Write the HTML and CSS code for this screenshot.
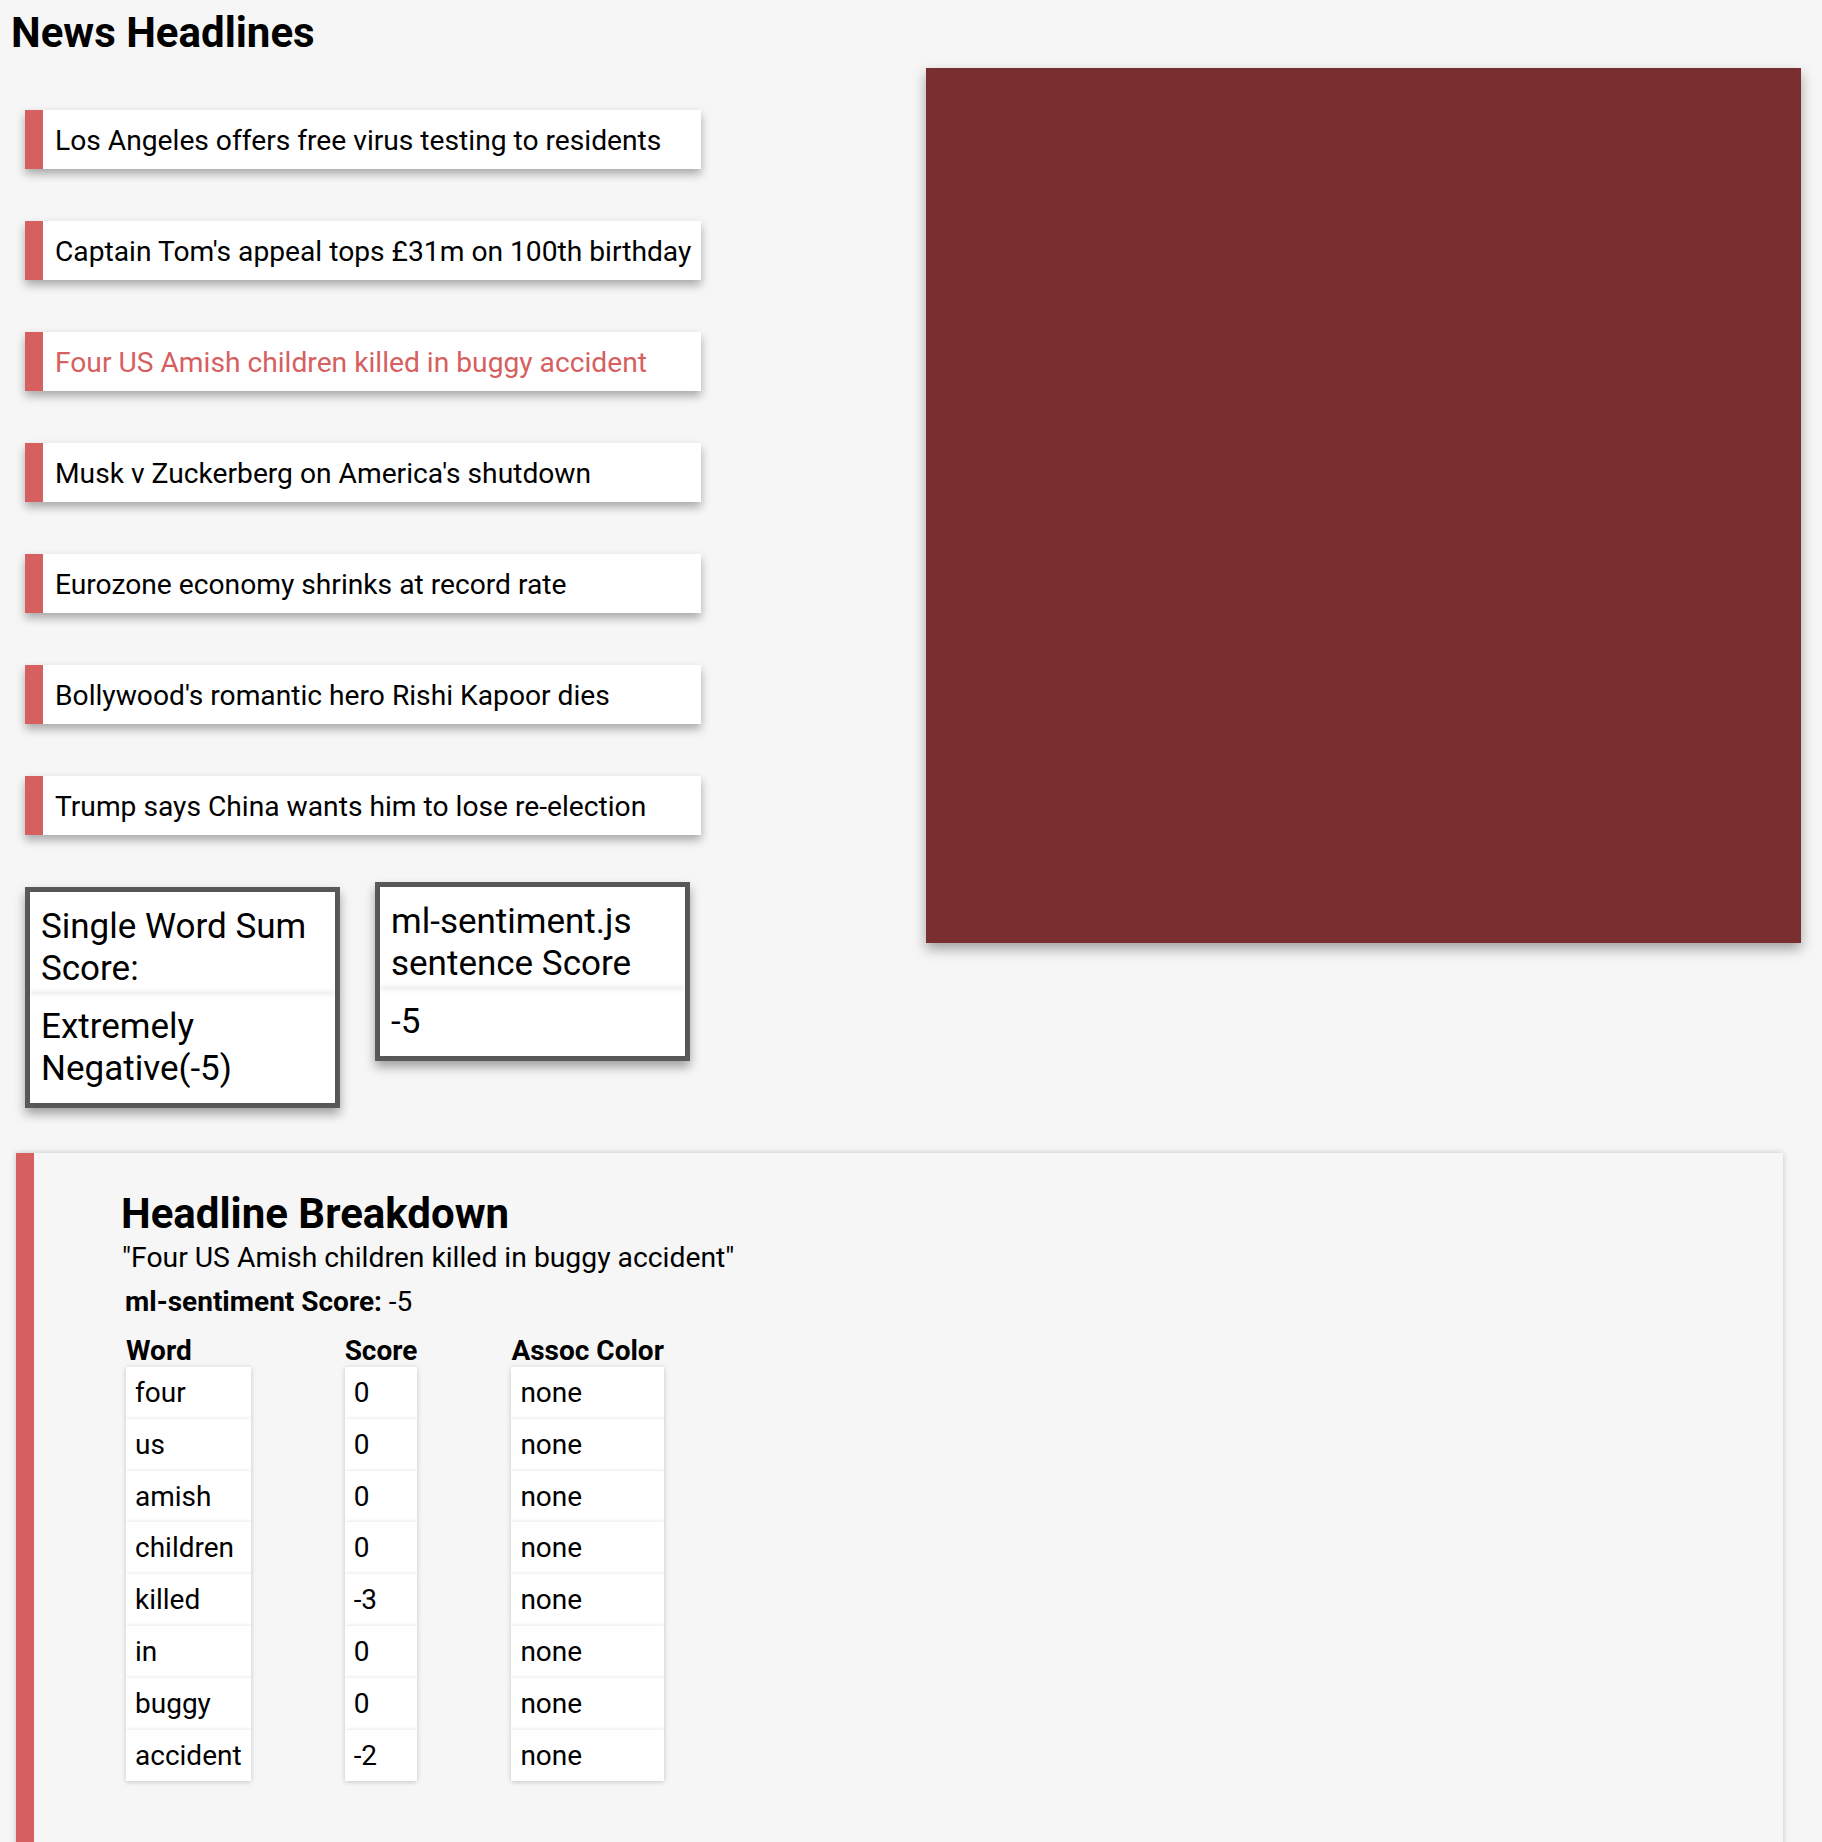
FILE: index.html
```html
<!DOCTYPE html>
<html lang="en">
<head>
  <meta charset="UTF-8">
  <title>News Headlines</title>
  <meta name="viewport" content="width=device-width, initial-scale=1.0"/>
  <link rel="stylesheet" href="styles.css">
</head>
<body>
  <h1 class="page-title">News Headlines</h1>

  <div class="top">
    <div class="left-col">
      <!-- Headline list -->
      <ul class="headline-list">
        <li class="headline">Los Angeles offers free virus testing to residents</li>
        <li class="headline">Captain Tom's appeal tops £31m on 100th birthday</li>
        <li class="headline is-active">Four US Amish children killed in buggy accident</li>
        <li class="headline">Musk v Zuckerberg on America's shutdown</li>
        <li class="headline">Eurozone economy shrinks at record rate</li>
        <li class="headline">Bollywood's romantic hero Rishi Kapoor dies</li>
        <li class="headline">Trump says China wants him to lose re-election</li>
      </ul>

      <!-- Scores -->
      <div class="score-row">
        <div class="score-box score-sum">
          <div class="score-head">Single Word Sum Score:</div>
          <div class="score-value">Extremely Negative(-5)</div>
        </div>
        <div class="score-box score-ml">
          <div class="score-head">ml-sentiment.js sentence Score</div>
          <div class="score-value">-5</div>
        </div>
      </div>
    </div>

    <div class="color-swatch"></div>
  </div>

  <!-- Breakdown -->
  <section class="breakdown">
    <h2>Headline Breakdown</h2>
    <p class="quote">"Four US Amish children killed in buggy accident"</p>
    <p class="ml-score"><b>ml-sentiment Score:</b> -5</p>

    <div class="word-grid">
      <div class="wg-head">Word</div>
      <div class="wg-head">Score</div>
      <div class="wg-head">Assoc Color</div>

      <div class="wg-cell">four</div><div class="wg-cell">0</div><div class="wg-cell">none</div>
      <div class="wg-cell">us</div><div class="wg-cell">0</div><div class="wg-cell">none</div>
      <div class="wg-cell">amish</div><div class="wg-cell">0</div><div class="wg-cell">none</div>
      <div class="wg-cell">children</div><div class="wg-cell">0</div><div class="wg-cell">none</div>
      <div class="wg-cell">killed</div><div class="wg-cell">-3</div><div class="wg-cell">none</div>
      <div class="wg-cell">in</div><div class="wg-cell">0</div><div class="wg-cell">none</div>
      <div class="wg-cell">buggy</div><div class="wg-cell">0</div><div class="wg-cell">none</div>
      <div class="wg-cell">accident</div><div class="wg-cell">-2</div><div class="wg-cell">none</div>
    </div>
  </section>
</body>
</html>
```

FILE: styles.css
```css
body {
  font-family: Roboto, "Liberation Sans", Arial, sans-serif;
  font-size: 28px;
  color: #000;
  margin: 0;
  background: #f6f6f6;
}

.page-title {
  margin: 0;
  padding: 8px 0 0 11px;
  font-size: 42px;
  line-height: 49px;
  font-weight: bold;
}

.top {
  display: flex;
  justify-content: space-between;
  align-items: flex-start;
  padding: 0 21px 0 25px;
}

.left-col {
  width: 676px;
}

.headline-list {
  list-style: none;
  margin: 53px 0 0;
  padding: 0;
}

.headline {
  display: flex;
  align-items: center;
  height: 59px;
  box-sizing: border-box;
  margin-bottom: 52px;
  padding: 2px 0 0 12px;
  font-size: 28.2px;
  background: #fff;
  border-left: 18px solid #d65f5f;
  box-shadow: 0 5px 9px rgba(0, 0, 0, 0.32);
}

.headline.is-active {
  color: #d65f5f;
}

.score-row {
  display: flex;
  align-items: flex-start;
  gap: 35px;
}

.score-box {
  width: 315px;
  box-sizing: border-box;
  border: 5px solid #5a5a5a;
  background: #fff;
  font-size: 35px;
  line-height: 42px;
  box-shadow: 0 6px 10px rgba(0, 0, 0, 0.35);
}

.score-ml {
  margin-top: -5px;
}

.score-head {
  padding: 14px 11px 3px;
  box-shadow: 0 0 6px rgba(0, 0, 0, 0.12);
}

.score-value {
  padding: 13px 11px 13px;
  box-shadow: 0 0 6px rgba(0, 0, 0, 0.12);
}

.color-swatch {
  width: 875px;
  height: 875px;
  margin-top: 11px;
  background: #792e30;
  box-shadow: 0 6px 12px rgba(0, 0, 0, 0.35);
}

/* Breakdown panel */
.breakdown {
  width: 1767px;
  box-sizing: border-box;
  margin: 45px 0 0 16px;
  padding: 36px 0 120px 87px;
  border-left: 18px solid #d65f5f;
  background: #f6f6f6;
  box-shadow: 0 0 6px rgba(0, 0, 0, 0.2);
}

.breakdown h2 {
  margin: 0;
  font-size: 42px;
  line-height: 49px;
}

.quote {
  margin: 3px 0 0 1px;
  font-size: 28.3px;
  line-height: 33px;
}

.ml-score {
  margin: 11px 0 0 4px;
  line-height: 33px;
}

.word-grid {
  display: grid;
  grid-template-columns: repeat(3, max-content);
  column-gap: 94px;
  margin: 16px 0 0 5px;
}

.wg-head {
  font-weight: bold;
  line-height: 33px;
}

.wg-cell {
  padding: 9px;
  line-height: 33.8px;
  background: #fff;
  box-shadow: 0 1px 5px rgba(0, 0, 0, 0.2);
}
```
